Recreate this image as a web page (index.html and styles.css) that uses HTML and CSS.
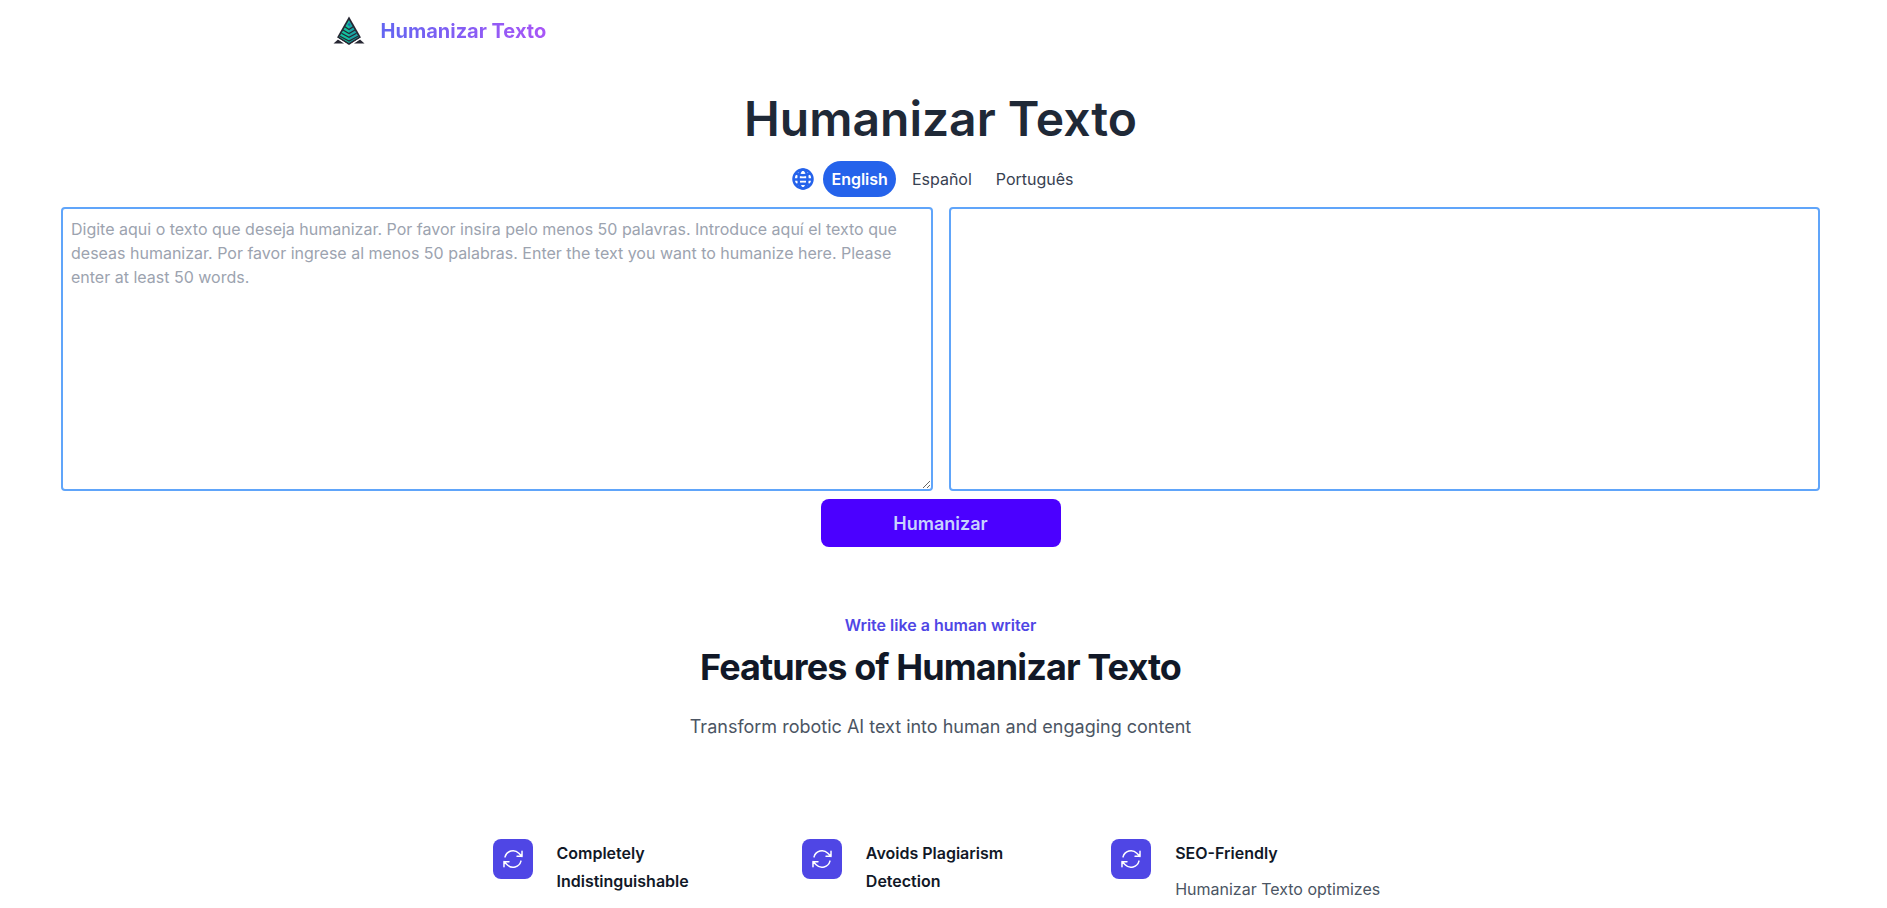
FILE: index.html
```html
<!DOCTYPE html>
<html lang="pt">
<head>
    <meta charset="UTF-8">
    <meta name="viewport" content="width=device-width, initial-scale=1.0">
    <title>Humanizar Texto</title>
    <link rel="stylesheet" href="styles.css">
</head>
<body>

    <header class="header">
        <a class="brand" href="/">
            <svg class="brand-logo" viewBox="0 0 32 32" aria-hidden="true">
                <path d="M16 1.500 L28 22.500 L16 30 L4 22.500 Z" fill="#272733"/>
                <path d="M16 5 L6.300 22 L16 28 Z" fill="#12c2a0"/>
                <path d="M16 5 L25.700 22 L16 28 Z" fill="#1aa3a3"/>
                <path d="M11.500 11.500 L16 14.500 L20.500 11.500 M10 15 L16 18.500 L22 15 M8.500 18.300 L16 22.300 L23.500 18.300 M7 21.300 L16 26 L25 21.300" fill="none" stroke="#272733" stroke-width="1.200"/>
                <circle cx="16" cy="9.500" r="1.300" fill="#2563a8"/>
                <path d="M0.500 28.500 L5 24.500 L11 28.500 Z M31.500 28.500 L27 24.500 L21 28.500 Z" fill="#272733"/>
                <path d="M4 23 L14 29.500 M28 23 L18 29.500" stroke="white" stroke-width="1"/>
            </svg>
            <span class="brand-name">Humanizar Texto</span>
        </a>
    </header>

    <main>
        <h1 class="title">Humanizar Texto</h1>

        <nav class="languages">
            <svg class="globe" viewBox="0 0 24 24" fill="none" stroke="currentColor" aria-hidden="true">
                <circle cx="12" cy="12" r="9.500"/>
                <ellipse cx="12" cy="12" rx="4.500" ry="9.500"/>
                <path d="M2.500 12.500h19M5 6.500c4 2.300 10 2.300 14 0M5 18c4-1.500 10-1.500 14 0"/>
            </svg>
            <a class="language active" href="/en">English</a>
            <a class="language" href="/es">Español</a>
            <a class="language" href="/">Português</a>
        </nav>

        <form class="converter">
            <div class="editors">
                <textarea class="editor" rows="11" aria-label="Texto" placeholder="Digite aqui o texto que deseja humanizar. Por favor insira pelo menos 50 palavras. Introduce aquí el texto que deseas humanizar. Por favor ingrese al menos 50 palabras. Enter the text you want to humanize here. Please enter at least 50 words."></textarea>
                <textarea class="editor output" rows="11" aria-label="Texto humanizado" readonly></textarea>
            </div>
            <button class="submit" type="button">Humanizar</button>
        </form>

        <section class="features">
            <p class="tagline">Write like a human writer</p>
            <h2 class="features-title">Features of Humanizar Texto</h2>
            <p class="features-text">Transform robotic AI text into human and engaging content</p>

            <div class="feature-list">
                <div class="feature">
                    <div class="feature-icon">
                        <svg viewBox="0 0 24 24" aria-hidden="true"><path d="M16.023 9.348h4.992v-.001M2.985 19.644v-4.992m0 0h4.992m-4.993 0l3.181 3.183a8.250 8.250 0 0013.803-3.700M4.031 9.865a8.250 8.250 0 0113.803-3.700l3.181 3.182m0-4.991v4.990"/></svg>
                    </div>
                    <h3 class="feature-name">Completely Indistinguishable</h3>
                </div>
                <div class="feature">
                    <div class="feature-icon">
                        <svg viewBox="0 0 24 24" aria-hidden="true"><path d="M16.023 9.348h4.992v-.001M2.985 19.644v-4.992m0 0h4.992m-4.993 0l3.181 3.183a8.250 8.250 0 0013.803-3.700M4.031 9.865a8.250 8.250 0 0113.803-3.700l3.181 3.182m0-4.991v4.990"/></svg>
                    </div>
                    <h3 class="feature-name">Avoids Plagiarism Detection</h3>
                </div>
                <div class="feature">
                    <div class="feature-icon">
                        <svg viewBox="0 0 24 24" aria-hidden="true"><path d="M16.023 9.348h4.992v-.001M2.985 19.644v-4.992m0 0h4.992m-4.993 0l3.181 3.183a8.250 8.250 0 0013.803-3.700M4.031 9.865a8.250 8.250 0 0113.803-3.700l3.181 3.182m0-4.991v4.990"/></svg>
                    </div>
                    <div>
                        <h3 class="feature-name">SEO-Friendly</h3>
                        <p class="feature-text">Humanizar Texto optimizes</p>
                    </div>
                </div>
            </div>
        </section>
    </main>

</body>
</html>
```
FILE: styles.css
```css
* { margin: 0; padding: 0; box-sizing: border-box; }
body { background: white; color: #1f2937; font-family: Inter, sans-serif; font-size: 16px; line-height: 24px; padding-right: 6px; }

.header { display: flex; max-width: 1280px; margin: 0 auto; padding: 15px 32px; }
.brand { display: flex; align-items: center; gap: 16px; text-decoration: none; }
.brand-logo { width: 32px; height: 32px; }
.brand-name { font-size: 20px; line-height: 28px; font-weight: 700; color: transparent; background: linear-gradient(to right, #6366f1, #a855f7); -webkit-background-clip: text; background-clip: text; }

.title { margin-top: 33px; text-align: center; font-size: 48px; line-height: 48px; font-weight: 600; }

.languages { display: flex; justify-content: center; align-items: center; margin-top: 18px; }
.globe { width: 24px; height: 24px; margin-right: 8px; color: #2563eb; stroke-width: 2.5; }
.language { margin-right: 8px; padding: 6px 8px; border-radius: 18px; color: #374151; text-decoration: none; }
.language.active { background: #2563eb; color: white; font-weight: 600; }

.converter { padding: 10px 61px 0; text-align: center; }
.editors { display: flex; gap: 16px; margin-bottom: 8px; }
.editor { flex: 1; min-width: 0; padding: 8px; border: 2px solid #60a5fa; border-radius: 4px; font: inherit; color: inherit; outline: none; }
.editor::placeholder { color: #9ca3af; }
.output { resize: none; }
.submit { width: 240px; height: 48px; border: none; border-radius: 8px; background: #4b00ff; color: #c7d2fe; font-family: inherit; font-size: 18px; font-weight: 600; cursor: pointer; }

.features { padding: 64px 32px 0; text-align: center; }
.tagline { color: #4f46e5; font-weight: 600; line-height: 28px; }
.features-title { margin-top: 8px; color: #111827; font-size: 36px; line-height: 40px; font-weight: 700; letter-spacing: -0.025em; }
.features-text { margin-top: 24px; color: #4b5563; font-size: 18px; line-height: 32px; }

.feature-list { display: grid; grid-template-columns: repeat(3, 1fr); gap: 32px; max-width: 896px; margin: 96px auto 0; text-align: left; }
.feature { display: flex; align-items: flex-start; gap: 24px; }
.feature-icon { flex: none; display: flex; align-items: center; justify-content: center; width: 40px; height: 40px; border-radius: 8px; background: #4f46e5; }
.feature-icon svg { width: 24px; height: 24px; fill: none; stroke: white; stroke-width: 1.5; stroke-linecap: round; stroke-linejoin: round; }
.feature-name { color: #111827; font-size: 16px; line-height: 28px; font-weight: 600; }
.feature-text { margin-top: 8px; color: #4b5563; line-height: 28px; }
```
